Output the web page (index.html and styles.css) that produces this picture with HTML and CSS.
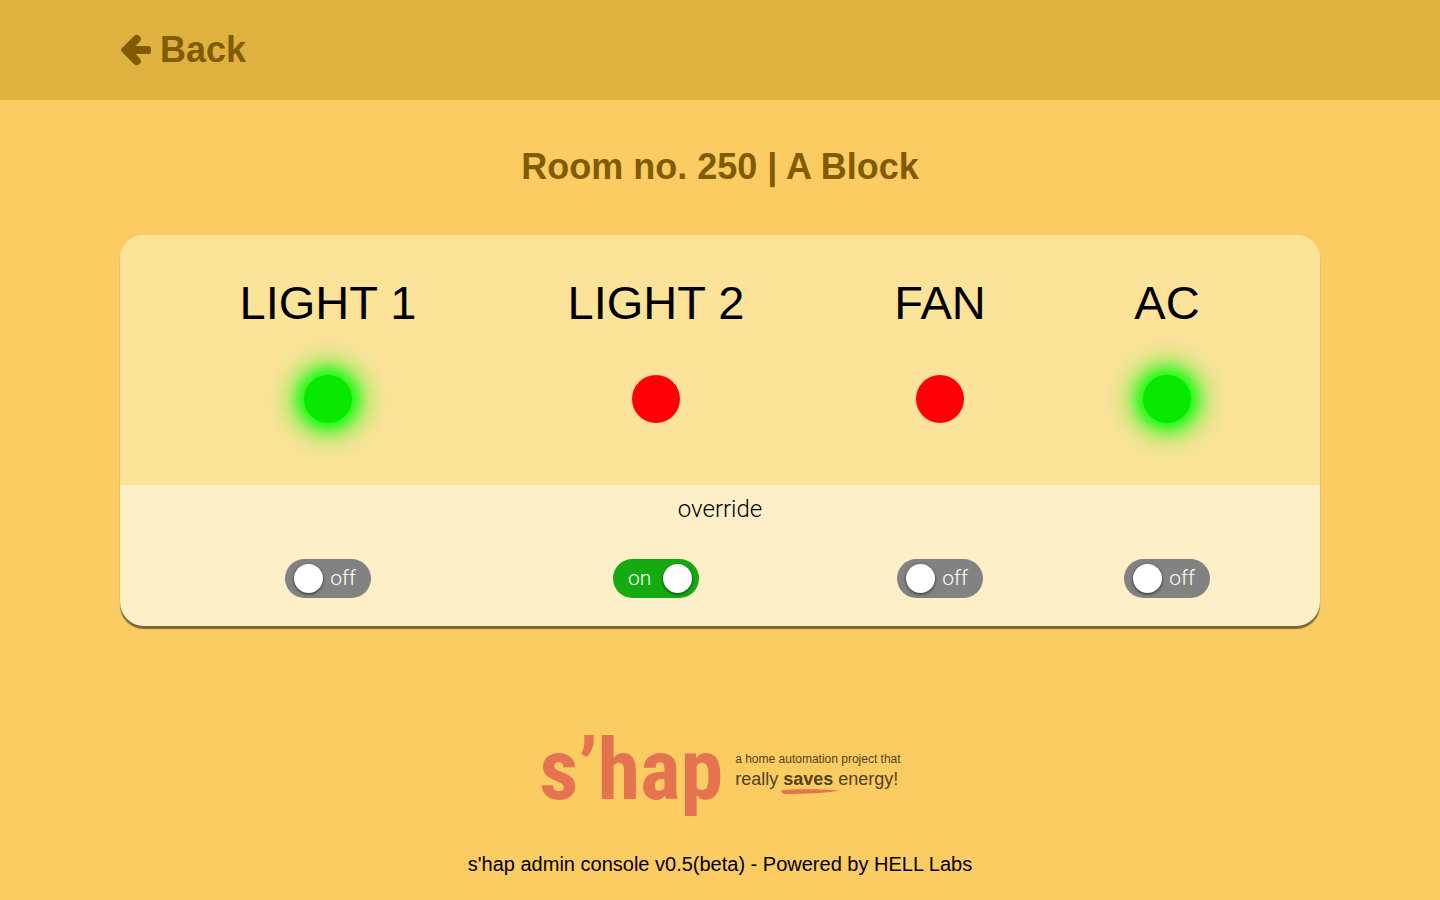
FILE: index.html
```html
<!DOCTYPE html>
<html lang="en">
<head>
<meta charset="utf-8">
<meta name="viewport" content="width=device-width, initial-scale=1">
<title>s'hap admin console</title>
<link rel="stylesheet" href="styles.css">
</head>
<body>
<header class="topbar">
  <a class="back" href="#">
    <svg class="back-icon" viewBox="0 0 32 34" aria-hidden="true"><path d="M2 15 14 3Q17 .5 19.500 3L20.500 4.200Q22 6.300 20 8.600L15.500 13H28.500Q31 13 31 15.500V18.500Q31 21 28.500 21H15.500L20 25.400Q22 27.700 20.500 29.800L19.500 31Q17 33.500 14 31L2 19Q0 17 2 15Z" fill="currentColor"/></svg>
    <span>Back</span>
  </a>
</header>
<main class="content">
  <h1 class="title">Room no. 250 | A Block</h1>
  <section class="panel">
    <div class="status columns">
      <div class="device"><h2 class="name" id="d1">LIGHT 1</h2><span class="lamp lamp-on"></span></div>
      <div class="device"><h2 class="name" id="d2">LIGHT 2</h2><span class="lamp"></span></div>
      <div class="device"><h2 class="name" id="d3">FAN</h2><span class="lamp"></span></div>
      <div class="device"><h2 class="name" id="d4">AC</h2><span class="lamp lamp-on"></span></div>
    </div>
    <div class="override">
      <p class="caption">override</p>
      <div class="columns">
        <label class="switch"><input class="knob" type="checkbox" aria-labelledby="d1"><span>off</span></label>
        <label class="switch switch-on"><input class="knob" type="checkbox" checked aria-labelledby="d2"><span>on</span></label>
        <label class="switch"><input class="knob" type="checkbox" aria-labelledby="d3"><span>off</span></label>
        <label class="switch"><input class="knob" type="checkbox" aria-labelledby="d4"><span>off</span></label>
      </div>
    </div>
  </section>
</main>
<footer class="footer">
  <div class="brand">
    <span class="logo">s’hap</span>
    <p class="tagline">
      <span class="tag-small">a home automation project that</span>
      <span class="tag-large">really <strong class="saves">saves<svg class="swoosh" viewBox="0 0 58 5" preserveAspectRatio="none" aria-hidden="true"><path d="M1 1C15 0 42 0 58 1.500C48 4 22 5 3 5Q-1 3 1 1Z" fill="#e67350"/></svg></strong> energy!</span>
    </p>
  </div>
  <p class="credits">s'hap admin console v0.5(beta) - Powered by HELL Labs</p>
</footer>
</body>
</html>
```
FILE: styles.css
```css
* { box-sizing: border-box; }
body {
  margin: 0;
  background: #fbcc62;
  color: #000;
  font-family: "Liberation Sans", Arial, sans-serif;
}
h1, h2, p { margin: 0; }
.topbar {
  display: flex;
  align-items: center;
  min-height: 100px;
  padding: 0 120px;
  background: #dfb13f;
}
.back {
  display: flex;
  align-items: center;
  gap: 8px;
  color: #805b00;
  font-size: 36px;
  line-height: 40px;
  font-weight: bold;
  text-decoration: none;
}
.back-icon { width: 32px; height: 34px; }
.content { padding: 0 120px; }
.title {
  padding: 47px 0 48px;
  color: #805b00;
  font-size: 36px;
  line-height: 40px;
  text-align: center;
}
.panel {
  border-radius: 24px;
  background: #fdf0c8;
  box-shadow: 0 3px 1px rgba(0, 0, 0, 0.5);
  overflow: hidden;
}
.columns {
  display: grid;
  grid-template-columns: 328fr 328fr 240fr 214fr;
  justify-items: center;
  padding: 0 46px 0 44px;
}
.status {
  padding-top: 40px;
  padding-bottom: 62px;
  background: #fce39a;
}
.device {
  display: flex;
  flex-direction: column;
  align-items: center;
  gap: 44px;
}
.name { font-size: 47px; line-height: 56px; font-weight: normal; }
.lamp {
  width: 48px;
  height: 48px;
  border-radius: 50%;
  background: #ff0008;
}
.lamp-on {
  background: #08e800;
  box-shadow: 0 0 32px 7px #0f0, 0 0 16px 3px #0f0;
}
.override {
  padding: 10px 0 28px;
  font-family: Roboto, "Liberation Sans", sans-serif;
  font-weight: 300;
}
.caption {
  padding-bottom: 36px;
  font-size: 24px;
  line-height: 28px;
  text-align: center;
}
.switch {
  display: flex;
  align-items: center;
  justify-content: space-between;
  width: 86px;
  height: 39px;
  padding: 0 15px 0 9px;
  border-radius: 20px;
  background: #828282;
  color: #fff;
  font-size: 21px;
  line-height: 36px;
}
.switch span { padding-bottom: 2px; }
.switch-on {
  flex-direction: row-reverse;
  padding: 0 7px 0 15px;
  background: #14aa10;
}
.knob {
  appearance: none;
  width: 29px;
  height: 29px;
  margin: 0;
  border-radius: 50%;
  background: #fff;
  box-shadow: 0 1px 3px rgba(0, 0, 0, 0.7);
}
.footer { padding: 84px 24px 24px; text-align: center; }
.brand {
  display: flex;
  justify-content: center;
  align-items: center;
  gap: 12px;
}
.logo {
  color: #e67350;
  font-family: "Roboto Condensed", "Open Sans Condensed", "Noto Sans Condensed", "Liberation Sans", sans-serif;
  font-size: 86px;
  line-height: 120px;
  font-weight: bold;
}
.tagline { color: #51431c; text-align: left; }
.tag-small { display: block; font-size: 12px; line-height: 18px; }
.tag-large { display: block; font-size: 18px; line-height: 22px; }
.saves { position: relative; }
.swoosh { position: absolute; left: -2px; bottom: -5px; width: 58px; height: 5px; }
.credits { padding-top: 22px; font-size: 20px; line-height: 24px; }
```
